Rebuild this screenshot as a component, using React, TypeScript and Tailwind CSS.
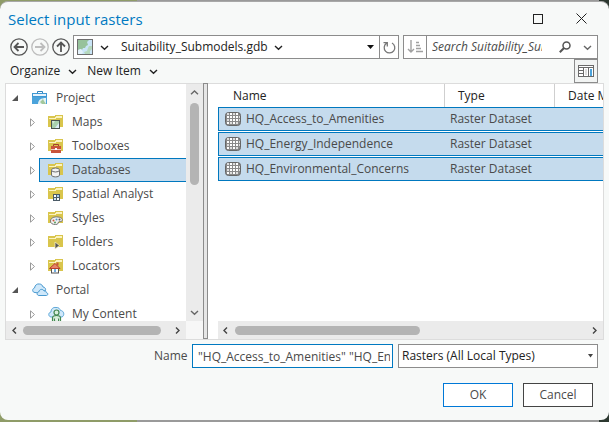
import React, { useState } from "react";

function Chevron({ dir = "down", className = "text-[#444]" }: { dir?: "down" | "up" | "left" | "right"; className?: string }) {
  const d = {
    down: "M1 3 L4.5 6.2 L8 3",
    up: "M1 6.2 L4.5 3 L8 6.2",
    left: "M6 1.5 L3 4.5 L6 7.5",
    right: "M3 1.5 L6 4.5 L3 7.5",
  }[dir];
  return (
    <svg width="9" height="9" viewBox="0 0 9 9" className={className} aria-hidden="true">
      <path d={d} fill="none" stroke="currentColor" strokeWidth="1.4" />
    </svg>
  );
}

function NavIcon({ d, color }: { d: string; color: string }) {
  return (
    <svg width="18" height="18" viewBox="0 0 18 18" fill="none" stroke={color} aria-hidden="true">
      <circle cx="9" cy="9" r="8.2" strokeWidth="1.3" />
      <path d={d} strokeWidth="1.8" />
    </svg>
  );
}

function MapIcon() {
  return (
    <svg width="16" height="16" viewBox="0 0 16 16" aria-hidden="true">
      <rect x="0.5" y="0.5" width="15" height="15" fill="#c9e4f7" stroke="#6e6e6e" />
      <path d="M1 1H12L10 3L11 6L9 7L8 9H6L5 11L4 10L1 11Z" fill="#96c29b" />
      <path d="M12 7H15V10L13 12V15H8L7 13L10 12L11 9Z" fill="#b5d8bd" />
      <path d="M1 11L4 10L6 13L5 15H1Z" fill="#e3f1fa" />
    </svg>
  );
}

function ProjectIcon() {
  return (
    <svg width="16" height="16" viewBox="0 0 16 16" aria-hidden="true">
      <path d="M5.5 3V1.5H10.5V3" fill="none" stroke="#2f83bd" />
      <rect x="0.5" y="3.5" width="14" height="3" fill="#e7f3fc" stroke="#3f98d3" />
      <rect x="0" y="7" width="15" height="7" fill="#4ba3db" />
      <path d="M6 14C6 10 9 8 14 8V14Z" fill="#e4f2f4" />
      <path d="M8 12L11 9L12 11L14 14H10Z" fill="#a3c89c" />
    </svg>
  );
}

function CloudIcon() {
  return (
    <svg width="17" height="16" viewBox="0 0 17 16" fill="#cfe8fa" stroke="#4a9ad0" aria-hidden="true">
      <path d="M3 10.5C0 10.5 0 6.5 2.5 6C3 3 5 1.5 7.5 2C9.5 2 10.5 3.5 11 5C13 5 14 7 13.500 8.500L7 11Z" />
      <path d="M7 13.500C4.500 13.500 4.500 10 7 9.700C7.300 7 11 6.500 12 9C14 8.500 14.500 10 14.300 10.500C16.500 11 16 13.500 14.500 13.500Z" />
    </svg>
  );
}

function PersonCloudIcon() {
  return (
    <svg width="17" height="16" viewBox="0 0 17 16" aria-hidden="true">
      <path d="M3 11C0 10.500 0 6.500 3 6C3 3 5 1 8 1.500C10.500 1 12 3 12.500 4.500C16 4.500 17 9.500 14 11Z" fill="#cfe8fa" stroke="#5fa8d8" />
      <circle cx="8.500" cy="6.500" r="2.500" fill="#d9efdd" stroke="#43864f" strokeWidth="1.200" />
      <path d="M4.500 15.500V12C4.500 10 6 9.500 8.500 9.500C11 9.500 12.500 10 12.500 12V15.500H10.500V12.500M6.500 12.500V15.500H10.500" fill="#d9efdd" stroke="#43864f" strokeWidth="1.200" />
    </svg>
  );
}

type Kind = "maps" | "tools" | "db" | "spatial" | "styles" | "folders" | "locators";

function FolderIcon({ kind }: { kind: Kind }) {
  return (
    <svg width="16" height="16" viewBox="0 0 16 16" aria-hidden="true">
      <path d="M0 2H7V1H15V13H0Z" fill="#d9c54c" />
      <path d="M8 2H14V3H8ZM1 4H7V3H14V4H8V5H1Z" fill="#fbf3c0" />
      {kind === "maps" && (
        <g>
          <rect x="3.500" y="6.500" width="8" height="8" fill="#a9d1ae" stroke="#4a5450" />
          <path d="M7 14L11 9V14Z" fill="#dceefa" />
          <path d="M4 7H7L5 10Z" fill="#d6ead6" />
        </g>
      )}
      {kind === "tools" && (
        <g>
          <path d="M5.500 8V6.500H10.500V8" fill="none" stroke="#a33e2a" />
          <rect x="3" y="8" width="10" height="7" fill="#c8543b" />
          <path d="M3 11.500H13" stroke="#f2c8bd" />
          <rect x="7" y="10" width="2" height="2" fill="#fff" />
        </g>
      )}
      {kind === "db" && (
        <g stroke="#6e6e6e" fill="#f2f2f2">
          <path d="M3.500 8V13C3.500 15.500 11.500 15.500 11.500 13V8" />
          <ellipse cx="7.500" cy="8" rx="4" ry="2" />
        </g>
      )}
      {kind === "spatial" && (
        <g shapeRendering="crispEdges">
          <rect x="5" y="8" width="7" height="7" fill="#4b5b66" />
          <rect x="6" y="9" width="2" height="2" fill="#fff" />
          <rect x="9" y="9" width="2" height="2" fill="#a9cff0" />
          <rect x="6" y="12" width="2" height="2" fill="#c9e2f6" />
          <rect x="9" y="12" width="2" height="2" fill="#fff" />
        </g>
      )}
      {kind === "styles" && (
        <g>
          <path d="M2.500 11C2.500 8 6 6.500 10 7C14 7.500 15 9.500 14 11C13 12 11.500 11 10.500 12C10 13.500 10 14.500 7.500 14.500C4.500 14.500 2.500 13.500 2.500 11Z" fill="#f1f1f1" stroke="#777" />
          <circle cx="5.500" cy="10.500" r="1" fill="#d05a3c" />
          <circle cx="8.500" cy="9.500" r="1" fill="#4b97d1" />
          <circle cx="11.500" cy="9.500" r="1" fill="#555" />
          <circle cx="7" cy="12.500" r="1" fill="#5b9c62" />
        </g>
      )}
      {kind === "folders" && <path d="M7 8L11.500 11.500L7 15Z" fill="#555" stroke="#f4ecc0" strokeWidth="0.800" />}
      {kind === "locators" && (
        <g>
          <rect x="3.500" y="10" width="7" height="5" fill="#fff" stroke="#555" />
          <path d="M1.500 10.500L7 5.500L12 10.500Z" fill="#e8836b" stroke="#b8402a" />
          <rect x="8.500" y="4.500" width="2" height="3" fill="#c8543b" />
          <rect x="6" y="11" width="2" height="3" fill="#70aee0" />
        </g>
      )}
    </svg>
  );
}

function RasterIcon() {
  return (
    <svg width="16" height="14" viewBox="0 0 16 14" aria-hidden="true">
      <rect x="0.500" y="0.500" width="15" height="13" rx="3" fill="#8a8a8a" stroke="#666" />
      <g shapeRendering="crispEdges">
        <path fill="#fff" d="M6 2h1v1h-1zM5 1h2v2h-2zM11 1h2v2h-2zM2 4h2v2h-2zM5 4h2v2h-2zM8 4h2v2h-2zM11 4h2v2h-2zM5 7h2v2h-2zM8 7h2v2h-2zM11 7h2v2h-2zM2 10h2v2h-2zM8 10h2v2h-2z" />
        <path fill="#dedede" d="M2 1h2v2h-2zM8 1h2v2h-2zM2 7h2v2h-2zM5 10h2v2h-2zM11 10h2v2h-2zM14 4h1v2h-1zM14 7h1v2h-1z" />
      </g>
    </svg>
  );
}

const folders: { label: string; kind: Kind }[] = [
  { label: "Maps", kind: "maps" },
  { label: "Toolboxes", kind: "tools" },
  { label: "Databases", kind: "db" },
  { label: "Spatial Analyst", kind: "spatial" },
  { label: "Styles", kind: "styles" },
  { label: "Folders", kind: "folders" },
  { label: "Locators", kind: "locators" },
];

const rasters = ["HQ_Access_to_Amenities", "HQ_Energy_Independence", "HQ_Environmental_Concerns"];

function RootNode({ label, icon }: { label: string; icon: React.ReactNode }) {
  return (
    <div className="flex h-6 items-center pl-1.5">
      <svg width="6" height="6" viewBox="0 0 6 6" className="mr-3.5 shrink-0" aria-hidden="true">
        <path d="M6 0V6H0Z" fill="#555" />
      </svg>
      <span className="flex w-6 shrink-0">{icon}</span>
      <span>{label}</span>
    </div>
  );
}

function ChildNode({ label, icon, selected, onClick }: { label: string; icon: React.ReactNode; selected?: boolean; onClick?: () => void }) {
  return (
    <div className="flex h-6 items-center pl-6">
      <svg width="6" height="9" viewBox="0 0 6 9" className="mr-[3px] shrink-0" aria-hidden="true">
        <path d="M0.500 0.800L4.500 4.500L0.500 8.200Z" fill="#fff" stroke="#9a9a9a" />
      </svg>
      <button
        type="button"
        onClick={onClick}
        className={
          selected
            ? "flex h-6 flex-1 items-center border border-r-0 border-[#0078bf] bg-[#c5dbed] pl-2 text-left"
            : "flex h-6 flex-1 items-center border border-r-0 border-transparent pl-2 text-left"
        }
      >
        <span className="flex w-6 shrink-0">{icon}</span>
        <span className="whitespace-nowrap">{label}</span>
      </button>
    </div>
  );
}

export default function App() {
  const [node, setNode] = useState("Databases");
  const [name, setName] = useState(rasters.map((r) => `"${r}"`).join(" "));

  return (
    <div className="flex min-h-screen flex-col bg-[linear-gradient(90deg,#8f9c68_0,#8f9c68_137px,#9a9a9a_137px,#9a9a9a_calc(100%-10px),#2c3830_calc(100%-10px))] pt-px pb-0.5 font-['Open_Sans',sans-serif] text-xs leading-4 text-[#4a4a4a]">
      <div role="dialog" aria-labelledby="title" className="flex flex-1 flex-col rounded-lg border-t border-[#a8a8a8] bg-[#f7f9f8]">
        <header className="flex h-[33px] items-center justify-between pr-[22px] pl-2">
          <h1 id="title" className="text-[15px] leading-6 text-[#0079c1]">Select input rasters</h1>
          <div className="flex items-center gap-[33px]">
            <button type="button" aria-label="Maximize" className="size-[10px] border border-[#222]" />
            <button type="button" aria-label="Close" className="text-[#222]">
              <svg width="11" height="11" viewBox="0 0 11 11" aria-hidden="true">
                <path d="M0.500 0.500L10.500 10.500M10.500 0.500L0.500 10.500" stroke="currentColor" />
              </svg>
            </button>
          </div>
        </header>

        <div className="flex h-6 items-center pr-[11px] pl-2.5">
          <nav className="mr-[3px] flex gap-[3px]">
            <button type="button" aria-label="Back"><NavIcon color="#555" d="M14 9H5M8.500 5L4.500 9L8.500 13" /></button>
            <button type="button" aria-label="Forward"><NavIcon color="#bdbdbd" d="M4 9H13M9.500 5L13.500 9L9.500 13" /></button>
            <button type="button" aria-label="Up"><NavIcon color="#555" d="M9 14V5M5 8.500L9 4.500L13 8.500" /></button>
          </nav>
          <div className="mr-1 flex h-6 flex-1 items-center border border-[#8c8c8c] bg-white pl-[3px] text-[#222]">
            <MapIcon />
            <button type="button" aria-label="Locations" className="mr-3 ml-[7px]"><Chevron className="text-[#222]" /></button>
            <span>Suitability_Submodels.gdb</span>
            <button type="button" aria-label="Subfolders" className="ml-1.5"><Chevron className="text-[#222]" /></button>
            <button type="button" aria-label="Recent paths" className="mr-[5px] ml-auto">
              <svg width="7" height="4" viewBox="0 0 7 4" aria-hidden="true"><path d="M0 0H7L3.500 4Z" fill="#111" /></svg>
            </button>
            <button type="button" aria-label="Refresh" className="flex h-full w-[19px] items-center justify-center border-l border-[#8c8c8c]">
              <svg width="13" height="13" viewBox="0 0 13 13" fill="none" stroke="#777" strokeWidth="1.300" aria-hidden="true">
                <path d="M9 2A5.300 5.300 0 1 1 3.500 2.300M0.500 1.700H4.300V5.500" />
              </svg>
            </button>
          </div>
          <div className="flex h-6 w-[195px] items-center border border-[#8c8c8c] bg-white">
            <button type="button" aria-label="Sort" className="flex h-full w-[23px] items-center justify-center border-r border-[#8c8c8c]">
              <svg width="17" height="14" viewBox="0 0 17 14" fill="none" stroke="#a0a0a0" strokeWidth="1.400" aria-hidden="true">
                <path d="M4 0V12M1 9L4 12L7 9" />
                <path d="M9 2.500H12M9 5.500H13M9 8.500H14M9 11.500H16" />
              </svg>
            </button>
            <input type="search" aria-label="Search" placeholder="Search Suitability_Submodels.gdb" className="ml-[5px] w-[122px] italic outline-none placeholder:text-[#4a4a4a]" />
            <button type="button" aria-label="Start search" className="ml-[5px]">
              <svg width="12" height="12" viewBox="0 0 12 12" fill="none" stroke="#555" aria-hidden="true">
                <circle cx="7.500" cy="4.500" r="3.500" strokeWidth="1.500" />
                <path d="M5 7L0.800 11.200" strokeWidth="2" />
              </svg>
            </button>
            <button type="button" aria-label="Search options" className="ml-3"><Chevron className="text-[#666]" /></button>
          </div>
        </div>

        <div className="flex h-6 items-center pr-[11px] pl-2.5 text-[#222]">
          <button type="button" className="mr-2.5 flex items-center gap-2">Organize <Chevron className="text-[#222]" /></button>
          <button type="button" className="flex items-center gap-2">New Item <Chevron className="text-[#222]" /></button>
          <button type="button" aria-label="Details pane" className="ml-auto flex h-6 w-6 items-center justify-center border border-[#8c8c8c] bg-[#f2f4f3]">
            <svg width="16" height="12" viewBox="0 0 16 12" shapeRendering="crispEdges" aria-hidden="true">
              <rect width="16" height="12" fill="#6a6a6a" />
              <path d="M1 1H15V2H1ZM1 3H5V5H1ZM1 6H5V8H1ZM1 9H5V11H1ZM6 3H10V11H6Z" fill="#fff" />
              <rect x="11" y="3" width="4" height="8" fill="#fff" />
              <rect x="12" y="4" width="2" height="7" fill="#4ba3db" />
              <rect x="7" y="4" width="2" height="6" fill="#ddd" />
            </svg>
          </button>
        </div>

        <main className="mx-[5px] flex min-h-[257px] flex-1 border-b border-[#dcdcdc]">
          <section aria-label="Locations" className="flex w-[198px] flex-col border-t border-l border-[#dcdcdc] bg-white">
            <div className="flex flex-1">
              <div className="h-[237px] flex-1 overflow-hidden pt-0.5">
                <RootNode label="Project" icon={<ProjectIcon />} />
                {folders.map((f) => (
                  <ChildNode key={f.label} label={f.label} icon={<FolderIcon kind={f.kind} />} selected={node === f.label} onClick={() => setNode(f.label)} />
                ))}
                <RootNode label="Portal" icon={<CloudIcon />} />
                <ChildNode label="My Content" icon={<PersonCloudIcon />} selected={node === "My Content"} onClick={() => setNode("My Content")} />
              </div>
              <div className="flex w-[17px] flex-col items-center bg-[#ebebeb] py-1">
                <Chevron dir="up" className="text-[#666]" />
                <div className="mt-1.5 h-[82px] w-[9px] rounded-full bg-[#b4b4b4]" />
                <div className="flex-1" />
                <Chevron className="text-[#666]" />
              </div>
            </div>
            <div className="flex h-[18px] items-center bg-[#ebebeb]">
              <span className="ml-1 w-[13px]"><Chevron dir="left" /></span>
              <div className="h-[9px] w-[138px] rounded-full bg-[#b4b4b4]" />
              <span className="ml-3 flex-1"><Chevron dir="right" /></span>
              <div className="h-full w-[17px] bg-[#f7f7f7]" />
            </div>
          </section>

          <div className="w-[5px] border border-[#8c8c8c] bg-[#e6e6e6]" />

          <section aria-label="Contents" className="flex min-w-0 flex-1 flex-col border-t border-r border-[#dcdcdc] bg-white">
            <div className="ml-2.5 flex-1 overflow-hidden">
              <table className="w-full min-w-[446px] table-fixed border-separate border-spacing-0 text-left">
                <thead className="text-[#222]">
                  <tr className="h-[23px]">
                    <th scope="col" className="w-[227px] border-r border-[#cfcfcf] p-0 pl-[15px] font-normal">Name</th>
                    <th scope="col" className="w-[110px] border-r border-[#cfcfcf] p-0 pl-[13px] font-normal">Type</th>
                    <th scope="col" className="p-0 pl-[13px] font-normal">Date Modified</th>
                  </tr>
                </thead>
                <tbody>
                  {rasters.map((r) => (
                    <tr key={r}>
                      <td className="p-0 pb-px">
                        <div className="flex h-6 items-center border border-r-0 border-[#0078bf] bg-[#c5dbed] pl-1.5">
                          <span className="mr-[5px] flex"><RasterIcon /></span>
                          {r}
                        </div>
                      </td>
                      <td className="p-0 pb-px">
                        <div className="flex h-6 items-center border-y border-[#0078bf] bg-[#c5dbed] pl-[5px]">Raster Dataset</div>
                      </td>
                      <td className="p-0 pb-px">
                        <div className="h-6 border-y border-[#0078bf] bg-[#c5dbed]" />
                      </td>
                    </tr>
                  ))}
                </tbody>
              </table>
            </div>
            <div className="ml-2.5 flex h-[18px] items-center bg-[#ebebeb]">
              <span className="ml-[3px] w-[14px]"><Chevron dir="left" /></span>
              <div className="h-[9px] w-[185px] rounded-full bg-[#b4b4b4]" />
              <span className="mr-1 ml-auto"><Chevron dir="right" /></span>
            </div>
          </section>
        </main>

        <footer className="flex flex-col gap-[15px] pt-1 pb-[13px]">
          <div className="flex items-center pr-[11px]">
            <label htmlFor="name" className="ml-[154px] w-[38px]">Name</label>
            <input id="name" value={name} onChange={(e) => setName(e.target.value)} className="mr-[5px] h-6 min-w-0 flex-1 border border-[#0079c1] bg-white pr-0.5 pl-[5px] outline-none" />
            <div className="relative w-[200px]">
              <select aria-label="File type" className="block h-6 w-full appearance-none border border-[#8c8c8c] bg-white pl-[3px] text-[#222]">
                <option>Rasters (All Local Types)</option>
              </select>
              <svg width="5" height="4" viewBox="0 0 5 4" className="pointer-events-none absolute top-2.5 right-[5px]" aria-hidden="true"><path d="M0 0H5L2.500 3.500Z" fill="#444" /></svg>
            </div>
          </div>
          <div className="flex justify-end gap-2.5 pr-4">
            <button type="button" className="h-6 w-[70px] border border-[#0078d7] bg-white">OK</button>
            <button type="button" className="h-6 w-[70px] border border-[#444] bg-white">Cancel</button>
          </div>
        </footer>
      </div>
    </div>
  );
}
